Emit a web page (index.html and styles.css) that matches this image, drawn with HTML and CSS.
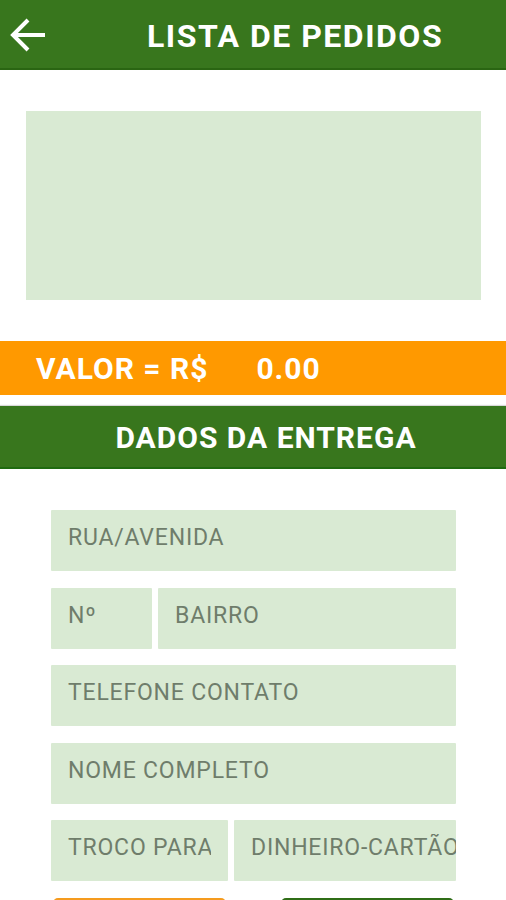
FILE: index.html
```html
<!DOCTYPE html>
<html>
<head>
    <link rel="stylesheet" href="styles.css">
</head>
<body>
    <div class="header">
        <svg class="back" viewBox="0 0 38 36" width="38" height="36">
            <path d="M36 18H4M19 3L4 18l15 15" fill="none" stroke="#fff" stroke-width="4"/>
        </svg>
        <h1>LISTA DE PEDIDOS</h1>
    </div>

    <div class="order-list"></div>

    <div class="total-bar">
        <span>VALOR = R$</span>
        <span class="total-value">0.00</span>
    </div>

    <div class="section-bar">DADOS DA ENTREGA</div>

    <form class="delivery-form">
        <input type="text" class="field" placeholder="RUA/AVENIDA">
        <div class="row">
            <input type="text" class="field number" placeholder="Nº">
            <input type="text" class="field" placeholder="BAIRRO">
        </div>
        <input type="text" class="field" placeholder="TELEFONE CONTATO">
        <input type="text" class="field" placeholder="NOME COMPLETO">
        <div class="row">
            <input type="text" class="field change" placeholder="TROCO PARA">
            <input type="text" class="field payment" placeholder="DINHEIRO-CARTÃO">
        </div>
        <div class="buttons">
            <button type="button" class="btn btn-cancel"></button>
            <button type="button" class="btn btn-send"></button>
        </div>
    </form>
</body>
</html>
```

FILE: styles.css
```css
body {
    font-family: Roboto, "Liberation Sans", sans-serif;
    background-color: #fff;
    margin: 0;
    padding: 0;
    width: 506px;
    height: 900px;
    overflow: hidden;
}

.header {
    display: flex;
    align-items: center;
    height: 68px;
    padding-left: 9px;
    background-color: #38761d;
    border-bottom: 2px solid #2a6512;
}

.back {
    display: block;
    margin-top: 2px;
}

.header h1 {
    margin: 4px 0 0 100px;
    font-size: 32px;
    font-weight: bold;
    letter-spacing: 1.5px;
    color: #fff;
}

.order-list {
    width: 455px;
    height: 189px;
    margin: 41px 0 0 26px;
    background-color: #d9ead3;
}

.total-bar {
    display: flex;
    align-items: center;
    height: 54px;
    margin-top: 41px;
    padding-left: 36px;
    background-color: #ff9900;
    color: #fff;
    font-size: 30px;
    font-weight: bold;
    letter-spacing: 1px;
}

.total-value {
    margin-left: 48px;
}

.section-bar {
    height: 61px;
    line-height: 64px;
    margin-top: 11px;
    padding-left: 26px;
    text-align: center;
    background-color: #38761d;
    border-bottom: 2px solid #1f6a10;
    box-shadow: 0 -1px 1px rgba(0, 0, 0, 0.15);
    color: #fff;
    font-size: 30px;
    font-weight: bold;
    letter-spacing: 1px;
}

.delivery-form {
    display: flex;
    flex-direction: column;
    gap: 16.5px;
    width: 405px;
    margin: 41px 0 0 51px;
}

.row {
    display: flex;
    gap: 6px;
}

.field {
    box-sizing: border-box;
    width: 100%;
    height: 61px;
    padding: 0 0 6px 17px;
    border: none;
    border-radius: 1px;
    background-color: #d9ead3;
    font-family: Roboto, "Liberation Sans", sans-serif;
    font-size: 23px;
    letter-spacing: 0.8px;
    color: #333;
}

.field::placeholder {
    color: #6f7d6b;
}

.field:focus {
    outline: none;
}

.row .number {
    flex: 0 0 101px;
}

.row .change {
    flex: 0 0 177px;
    padding-right: 17px;
}

.row .payment {
    flex: 1;
    min-width: 0;
}

.buttons {
    display: flex;
    justify-content: space-between;
    padding: 0 2px;
}

.btn {
    width: 173px;
    height: 50px;
    border: none;
    border-radius: 5px;
}

.btn-cancel {
    background-color: #f59b1e;
}

.btn-send {
    background-color: #2f6d17;
}
```
